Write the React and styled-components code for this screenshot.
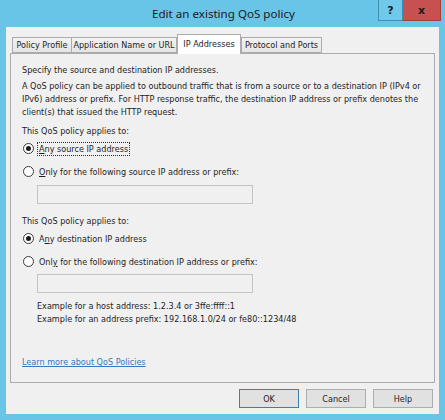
import React from "react";
import styled, { createGlobalStyle } from "styled-components";

const Global = createGlobalStyle`
  html, body { margin: 0; padding: 0; }
  body { background: #68c5e8; font-family: "DejaVu Sans Condensed", "DejaVu Sans", sans-serif; }
`;

const Window = styled.div`
  width: 445px;
  height: 420px;
  box-sizing: border-box;
  background: #68c5e8;
  padding: 0 6px 6px 6px;
  display: flex;
  flex-direction: column;
`;

const TitleBar = styled.div`
  height: 27px;
  display: grid;
  grid-template-columns: 1fr auto 1fr;
  align-items: start;
  margin: 0 -2px 0 0;
`;

const Title = styled.div`
  grid-column: 2;
  font-family: "Noto Sans", "Open Sans", sans-serif;
  font-size: 11.6px;
  color: #1b1b1b;
  line-height: 27px;
`;

const Caption = styled.div`
  grid-column: 3;
  justify-self: end;
  display: flex;
`;

const CapButton = styled.div`
  width: ${p => p.$w}px;
  height: 21px;
  box-sizing: border-box;
  background: ${p => (p.$close ? "#c75050" : "#6fc9ea")};
  border: 1px solid ${p => (p.$close ? "#a63c3c" : "#3f8fb0")};
  border-top: none;
  ${p => (p.$close ? "border-left: none;" : "")}
  display: flex;
  align-items: center;
  justify-content: center;
  font-family: "DejaVu Sans", sans-serif;
  font-weight: bold;
  font-size: 11px;
  color: #1a1a1a;
`;

const Client = styled.div`
  flex: 1;
  background: #f0f0f0;
  padding: 7px 4px 0 4px;
  display: flex;
  flex-direction: column;
`;

const TabStrip = styled.div`
  display: flex;
  align-items: flex-end;
  padding-left: 2px;
  height: 19px;
  position: relative;
  z-index: 1;
`;

const Tab = styled.div`
  box-sizing: border-box;
  width: ${p => p.$w}px;
  height: ${p => (p.$active ? 20 : 16)}px;
  margin-bottom: ${p => (p.$active ? -1 : 0)}px;
  border: 1px solid #acacac;
  border-bottom: ${p => (p.$active ? "none" : "1px solid #acacac")};
  ${p => (p.$joined ? "border-left: none;" : "")}
  background: ${p => (p.$active ? "#ffffff" : "linear-gradient(#f2f2f2, #e5e5e5)")};
  font-size: 9px;
  color: #1e1e1e;
  display: flex;
  align-items: center;
  justify-content: center;
  white-space: nowrap;
  padding-bottom: ${p => (p.$active ? 2 : 0)}px;
`;

const Panel = styled.div`
  height: 330px;
  box-sizing: border-box;
  border: 1px solid #acacac;
  background: #f0f0f0;
  padding: 10px 11px 0 11px;
  display: flex;
  flex-direction: column;
  font-size: 9px;
  color: #1e1e1e;
`;

const Text = styled.div`
  line-height: 13px;
  margin-top: ${p => p.$mt || 0}px;
  margin-left: ${p => p.$ml || 0}px;
  white-space: nowrap;
`;

const RadioRow = styled.label`
  display: flex;
  align-items: center;
  height: 15px;
  margin-top: ${p => p.$mt || 0}px;
  margin-left: 1px;
  gap: 3px;
`;

const RadioCircle = styled.span`
  width: 11px;
  height: 11px;
  box-sizing: border-box;
  border-radius: 50%;
  border: 1px solid #3a3a3a;
  background: #fff;
  display: flex;
  align-items: center;
  justify-content: center;
  &::after {
    content: "";
    width: 5px;
    height: 5px;
    border-radius: 50%;
    background: ${p => (p.$checked ? "#1a1a1a" : "transparent")};
  }
`;

const RadioLabel = styled.span`
  line-height: 12px;
  padding: 0 1px;
  border: 1px dotted ${p => (p.$focus ? "#333" : "transparent")};
`;

const Key = styled.span`
  text-decoration: underline;
`;

const Field = styled.div`
  width: 216px;
  height: 19px;
  box-sizing: border-box;
  margin-left: 15px;
  margin-top: ${p => p.$mt || 0}px;
  border: 1px solid #c4c4c4;
  background: #f0f0f0;
`;

const Spacer = styled.div`
  flex: 1;
`;

const Link = styled.a`
  color: #3676c5;
  text-decoration: underline;
  line-height: 13px;
  margin-bottom: 13px;
  align-self: flex-start;
`;

const ButtonRow = styled.div`
  display: flex;
  justify-content: flex-end;
  gap: 7px;
  padding: 6px 2px 0 0;
`;

const Button = styled.div`
  width: 60px;
  height: 19px;
  box-sizing: border-box;
  background: #e1e1e1;
  border: 1px solid ${p => (p.$default ? "#3c7fb1" : "#adadad")};
  font-size: 9px;
  color: #1e1e1e;
  display: flex;
  align-items: center;
  justify-content: center;
`;

export default function App() {
  return (
    <>
      <Global />
      <Window>
        <TitleBar>
          <Title>Edit an existing QoS policy</Title>
          <Caption>
            <CapButton $w={25}>?</CapButton>
            <CapButton $w={38} $close>x</CapButton>
          </Caption>
        </TitleBar>
        <Client>
          <TabStrip>
            <Tab $w={60}>Policy Profile</Tab>
            <Tab $w={105} $joined>Application Name or URL</Tab>
            <Tab $w={64} $active>IP Addresses</Tab>
            <Tab $w={81}>Protocol and Ports</Tab>
          </TabStrip>
          <Panel>
            <Text>Specify the source and destination IP addresses.</Text>
            <Text $mt={3}>
              A QoS policy can be applied to outbound traffic that is from a source or to a destination IP (IPv4 or
              <br />
              IPv6) address or prefix. For HTTP response traffic, the destination IP address or prefix denotes the
              <br />
              client(s) that issued the HTTP request.
            </Text>
            <Text $mt={6}>This QoS policy applies to:</Text>
            <RadioRow $mt={3}>
              <RadioCircle $checked />
              <RadioLabel $focus><Key>A</Key>ny source IP address</RadioLabel>
            </RadioRow>
            <RadioRow $mt={8}>
              <RadioCircle />
              <RadioLabel><Key>O</Key>nly for the following source IP address or prefix:</RadioLabel>
            </RadioRow>
            <Field $mt={6} />
            <Text $mt={11}>This QoS policy applies to:</Text>
            <RadioRow $mt={3}>
              <RadioCircle $checked />
              <RadioLabel>A<Key>n</Key>y destination IP address</RadioLabel>
            </RadioRow>
            <RadioRow $mt={8}>
              <RadioCircle />
              <RadioLabel>Onl<Key>y</Key> for the following destination IP address or prefix:</RadioLabel>
            </RadioRow>
            <Field $mt={5} />
            <Text $ml={15} $mt={7}>
              Example for a host address: 1.2.3.4 or 3ffe:ffff::1
              <br />
              Example for an address prefix: 192.168.1.0/24 or fe80::1234/48
            </Text>
            <Spacer />
            <Link href="#">Learn more about QoS Policies</Link>
          </Panel>
          <ButtonRow>
            <Button $default>OK</Button>
            <Button>Cancel</Button>
            <Button>Help</Button>
          </ButtonRow>
        </Client>
      </Window>
    </>
  );
}
